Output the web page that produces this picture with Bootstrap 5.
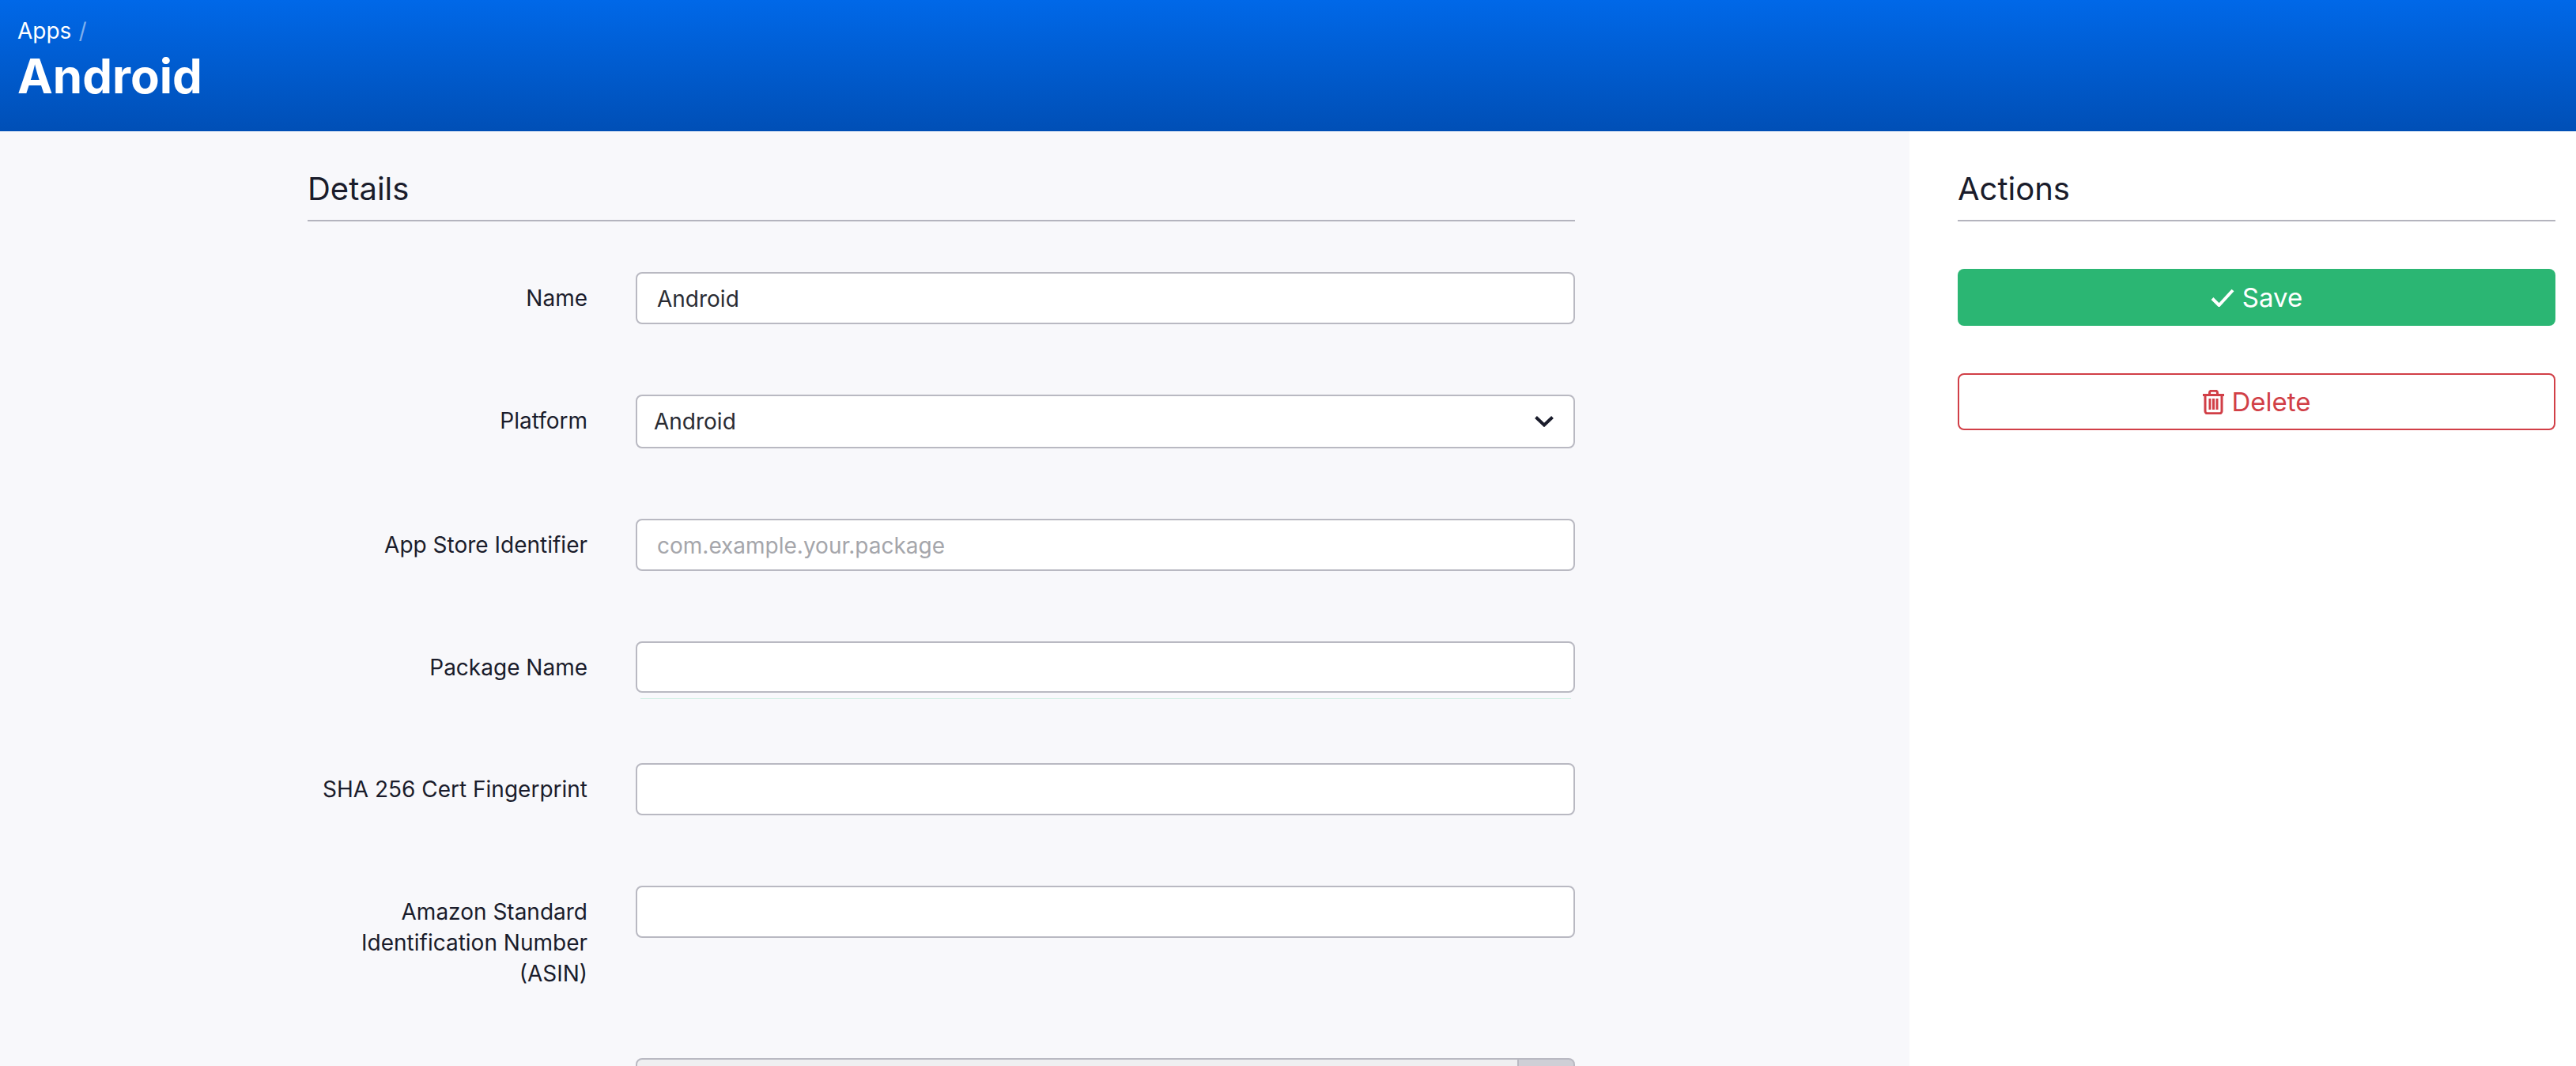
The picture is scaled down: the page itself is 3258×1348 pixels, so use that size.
<!DOCTYPE html>
<html lang="en">
<head>
<meta charset="utf-8">
<title>Android</title>
<link rel="stylesheet" href="https://cdn.jsdelivr.net/npm/bootstrap@5.3.0/dist/css/bootstrap.min.css">
<style>
html,body{height:100%;overflow:hidden}
body{font-family:Inter,"Liberation Sans",sans-serif;color:#1a1c2b;background:#fff}
.app-head{height:166px;background:linear-gradient(180deg,#0068e8 0%,#004fb6 100%);padding:22px 22px 0;color:#fff}
.crumb{font-size:28px;line-height:34px;color:#fff}
.crumb-sep{color:rgba(255,255,255,.5);margin-left:9px}
.app-title{font-size:60px;line-height:70px;font-weight:700;margin:5px 0 0;color:#fff}
.main-pane{width:2415px;background:#f8f8fb;padding:0 423px 0 389px;flex:none}
.side-pane{padding:0 26px 0 61px;flex:1 1 auto}
.sect-title{font-size:40px;line-height:50px;font-weight:400;margin:0;padding:48px 0 0;border-bottom:2px solid #b4b4be;height:114px}
.side-pane .sect-title{margin-bottom:60px}
.main-pane .sect-title{margin-bottom:64px}
.field-row{display:flex;margin-bottom:89px}
.field-row-tall{margin-bottom:87px}
.field-label{width:354px;flex:none;text-align:right;font-size:28px;line-height:39px;padding:14px 0 0;margin:0}
.field-ctl{margin-left:61px;flex:1 1 auto;min-width:0}
.form-control.fld,.form-select.fld{height:65.6px;border:2px solid #b9b9c2;border-radius:8px;font-size:28px;line-height:39px;padding:2px 25px 0;color:#2a2c33;background-color:#fff}
.form-control.fld::placeholder{color:#a5a6ab;opacity:1}
.form-select.fld{height:68.6px;padding:2px 60px 0 21px;background-size:24px 14px;background-position:right 25px center;background-image:url("data:image/svg+xml,%3csvg xmlns='http://www.w3.org/2000/svg' viewBox='0 0 24 14'%3e%3cpath fill='none' stroke='%231a1c2b' stroke-width='4' d='M1.5 1.5 12 11.5 22.5 1.5'/%3e%3c/svg%3e")}
.strength{height:1px;background:#cdeee2;margin:7px 5px -8px 6px}
.input-group .form-control.fld:disabled{background:#efeff1}
.addon{width:72px;background:#cfcfd6;border:2px solid #b9b9c2;border-left:0;border-radius:0 8px 8px 0;height:65.6px}
.act-btn{display:flex;align-items:center;justify-content:center;gap:10px;width:100%;height:72px;border-radius:8px;font-size:33px;line-height:1;padding:0}
.act-save{background:#2bb673;border:0;color:#fff;margin-bottom:60px}
.act-del{background:#fff;border:2px solid #d13f47;color:#d13f47}
</style>
</head>
<body>
<div class="d-flex flex-column vh-100 overflow-hidden">
  <header class="app-head flex-shrink-0">
    <div class="crumb">Apps<span class="crumb-sep">/</span></div>
    <h1 class="app-title">Android</h1>
  </header>
  <div class="d-flex flex-grow-1 overflow-hidden">
    <main class="main-pane">
      <h2 class="sect-title">Details</h2>
      <form>
        <div class="field-row"><label class="field-label">Name</label><div class="field-ctl"><input class="form-control fld" value="Android"></div></div>
        <div class="field-row"><label class="field-label">Platform</label><div class="field-ctl"><select class="form-select fld"><option>Android</option></select></div></div>
        <div class="field-row"><label class="field-label">App Store Identifier</label><div class="field-ctl"><input class="form-control fld" placeholder="com.example.your.package"></div></div>
        <div class="field-row"><label class="field-label">Package Name</label><div class="field-ctl"><input class="form-control fld"><div class="strength"></div></div></div>
        <div class="field-row"><label class="field-label">SHA 256 Cert Fingerprint</label><div class="field-ctl"><input class="form-control fld"></div></div>
        <div class="field-row field-row-tall"><label class="field-label">Amazon Standard Identification Number (ASIN)</label><div class="field-ctl"><input class="form-control fld"></div></div>
        <div class="field-row"><label class="field-label"></label><div class="field-ctl"><div class="input-group"><input class="form-control fld" disabled><span class="addon"></span></div></div></div>
      </form>
    </main>
    <aside class="side-pane">
      <h2 class="sect-title">Actions</h2>
      <button type="button" class="btn act-btn act-save"><svg width="30" height="23" viewBox="0 0 30 23"><path d="M2 12.5 10.5 21 28 2" fill="none" stroke="#fff" stroke-width="4"/></svg>Save</button>
      <button type="button" class="btn act-btn act-del"><svg width="27" height="31" viewBox="0 0 27 31"><g fill="none" stroke="#d13f47" stroke-width="3"><path d="M0 6.5h27M3 6.5V27a2.7 2.7 0 0 0 2.7 2.7h15.6A2.7 2.7 0 0 0 24 27V6.5M8.5 6.5V3.7a2.4 2.4 0 0 1 2.4-2.4h5.2a2.4 2.4 0 0 1 2.4 2.4v2.8M9 11v14M13.5 11v14M18 11v14"/></g></svg>Delete</button>
    </aside>
  </div>
</div>
<script src="https://cdn.jsdelivr.net/npm/bootstrap@5.3.0/dist/js/bootstrap.bundle.min.js"></script>
</body>
</html>
